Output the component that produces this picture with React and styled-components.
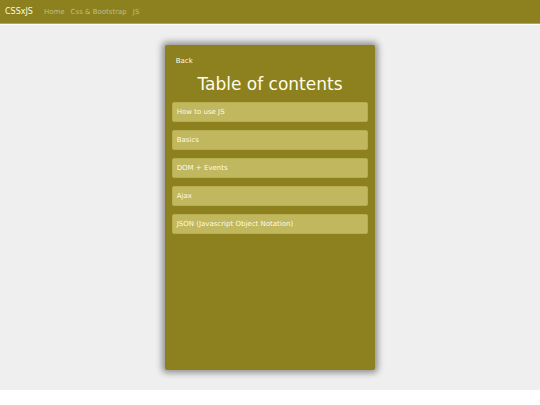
import React from "react";
import styled, { createGlobalStyle } from "styled-components";

const GlobalStyle = createGlobalStyle`
    * {
        box-sizing: border-box;
    }
    body {
        margin: 0;
        background-color: #fff;
        font-family: "DejaVu Sans", sans-serif;
        font-size: 7px;
        line-height: 10px;
    }
`;

const Navbar = styled.nav`
    display: flex;
    align-items: center;
    height: 24px;
    padding: 0 5px;
    background-color: #8c811e;
    border-bottom: 1px solid #b0a85e;
`;

const Brand = styled.a`
    margin-right: 11px;
    color: #fffbe0;
    font-size: 8px;
    text-decoration: none;
`;

const NavList = styled.ul`
    display: flex;
    gap: 6px;
    margin: 0;
    padding: 0;
    list-style: none;
`;

const NavLink = styled.a`
    display: block;
    color: #c4bd84;
    text-decoration: none;
    &:hover {
        color: #fff;
    }
`;

const Main = styled.main`
    display: flex;
    justify-content: center;
    padding: 20px 0;
    border-top: 1px solid #fff;
    background-color: #efefef;
`;

const Card = styled.section`
    width: 39%;
    min-height: 325px;
    padding: 11px 7px;
    border-radius: 2px;
    background-color: #8c811e;
    box-shadow: 0 0 6px 3px #929292;
`;

const BackLink = styled.a`
    display: inline-block;
    margin-left: 4px;
    color: #fffbe0;
    text-decoration: none;
`;

const Title = styled.h1`
    margin: 7px 0;
    color: #fffde8;
    font-size: 17px;
    font-weight: 400;
    line-height: 22px;
    text-align: center;
`;

const TopicList = styled.ul`
    display: grid;
    gap: 8px;
    margin: 0;
    padding: 0;
    list-style: none;
`;

const TopicLink = styled.a`
    display: block;
    padding: 4px;
    border: 1px solid #b6ad50;
    border-radius: 2px;
    background-color: #c1b75e;
    color: #fffbe0;
    text-decoration: none;
`;

const pages = ["Home", "Css & Bootstrap", "JS"];

const topics = [
    "How to use JS",
    "Basics",
    "DOM + Events",
    "Ajax",
    "JSON (Javascript Object Notation)",
];

const App = () => <>
    <GlobalStyle />
    <Navbar>
        <Brand href="#">CSSxJS</Brand>
        <NavList>
            {pages.map(page => <li key={page}><NavLink href="#">{page}</NavLink></li>)}
        </NavList>
    </Navbar>
    <Main>
        <Card>
            <BackLink href="#">Back</BackLink>
            <Title>Table of contents</Title>
            <TopicList>
                {topics.map(topic => <li key={topic}><TopicLink href="#">{topic}</TopicLink></li>)}
            </TopicList>
        </Card>
    </Main>
</>

export default App
